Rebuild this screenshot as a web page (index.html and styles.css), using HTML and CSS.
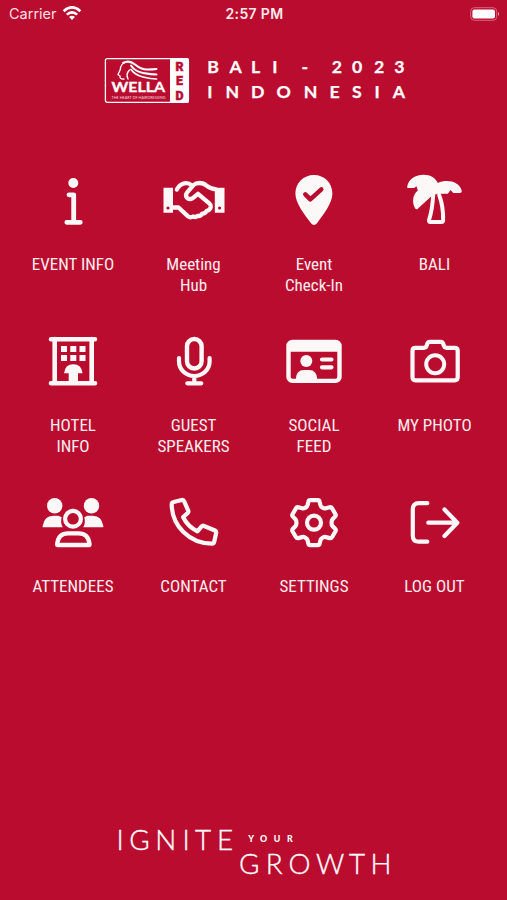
FILE: index.html
```html
<!DOCTYPE html>
<html lang="en">
<head>
<meta charset="utf-8">
<title>Event Home</title>
<link rel="stylesheet" href="styles.css">
</head>
<body>
<div class="status">
  <div class="carrier"><span>Carrier</span>
    <svg width="20" height="16" viewBox="0 0 20 16" fill="none" stroke="#fff" stroke-width="2.6"><path d="M1.600 5.200Q10-2.300 18.400 5.200M4.800 8.600Q10 4 15.200 8.600"/><path d="M7 11Q10 8.300 13 11L10 14.100Z" fill="#fff" stroke="none"/></svg>
  </div>
  <div class="time">2:57 PM</div>
  <svg class="battery" width="30" height="14" viewBox="0 0 30 14"><rect x=".7" y=".7" width="26" height="12.6" rx="3.6" fill="none" stroke="#d9667d" stroke-width="1"/><rect x="2.4" y="2.400" width="22.600" height="9.200" rx="2" fill="#fff"/><path d="M28 5Q30.300 7 28 9Z" fill="#e69aaa"/></svg>
</div>

<header class="brand">
  <svg width="310" height="48" viewBox="103 56 310 48">
    <rect x="105.400" y="58.700" width="83" height="43.600" rx="2" fill="none" stroke="#fff" stroke-width="1.300"/>
    <path d="M170 58h17q2 0 2 2v41q0 2-2 2h-17z" fill="#fff"/>
    <g fill="none" stroke="#fff" stroke-linecap="round">
      <path d="M127 61.500Q120.500 63.500 120.300 69.500L118 74.500L120 76Q119.500 79.500 124 79" stroke-width="1.300"/>
      <path d="M123 63Q129 59.500 135 64.500T147 69.500T156.500 69" stroke-width="2.100"/>
      <path d="M131 65.500Q135 71.500 143 73T156.500 74.500" stroke-width="2"/>
      <path d="M131 69.500Q135 75 143 77T156.500 79" stroke-width="1.700"/>
      <path d="M129.500 70Q125.500 74 128 79" stroke-width="1.400"/>
    </g>
    <text class="wella" x="111.500" y="91.800" textLength="53.500" lengthAdjust="spacingAndGlyphs">WELLA</text>
    <text class="tagline" x="111.500" y="99.400" textLength="54" lengthAdjust="spacingAndGlyphs">THE HEART OF HAIRDRESSING</text>
    <text class="red" x="179.500" y="70.600">R</text>
    <text class="red" x="179.500" y="85.200">E</text>
    <text class="red" x="179.500" y="100">D</text>
    <text class="place" y="72.800" x="207.200 229.500 251 272.200 301.500 331.800 352 374 394.200">BALI-2023</text>
    <text class="place" y="97.800" x="207.200 225.500 251 276.500 303.800 329.500 352 374.500 392.700">INDONESIA</text>
  </svg>
</header>

<main class="menu">
  <a class="item"><svg class="icon" viewBox="0 0 64 64"><circle cx="32.300" cy="14" r="5" class="fill"/><path d="M28 25.800h4.700v27M25.800 53.300h13.500" stroke-width="4.800"/></svg><span>EVENT INFO</span></a>

  <a class="item"><svg class="icon" viewBox="0 0 64 64"><path d="M1.500 18.700H11v25H1.500zM52.800 18.700h9.700v25h-9.700z" class="fill"/><circle cx="6" cy="39" r="1.600" class="hole"/><circle cx="57.600" cy="39" r="1.600" class="hole"/><path d="M10 38.500h6.500L25.500 46.800q2.800 2.400 5.500.7 2.500 1.300 4.500-.7 3 .8 4.700-2.200 3 .2 4.600-2.800 3.500-.5 4-4 .2-1.800-1.500-3.400L36 24.800l-5.200 4.400q-3.600 2-6-.6-1.800-2.800.4-5.300l6.300-7.300q2.300-2 6-2 4 0 7 2.700 3.500 3 9.500 3.700M14.800 20.500q3.200-5.800 8.700-6.300 3.700-.2 6 2" stroke-width="4.300"/></svg><span>Meeting<br>Hub</span></a>

  <a class="item"><svg class="icon" viewBox="0 0 64 64"><path class="fill" d="M32 6C21.500 6 13.400 14 13.400 24.500c0 10 9 20.500 15.600 29.800q3 3.600 6 0C41.500 45 50.400 34.500 50.400 24.500 50.400 14 42.500 6 32 6z"/><path class="check" d="M23.300 25.300l5 5L39.300 20.300"/></svg><span>Event<br>Check-In</span></a>

  <a class="item"><svg class="icon" viewBox="0 0 64 64"><path class="fill" d="M4.200 17.800C5 11 11.500 5.700 20.500 5.700c7 0 12.300 3.500 14.300 8.300 9-4 21.500-2 24 8q0 1.700-1.500 2h-7l-2.800-3-2.700 3.700H35l-5.500 1.500L14.500 40q-1.500 1-2.400-.7C8.800 33.500 9.500 26 14.800 21.500l-1.300-4.300-2.300 1.800H5q-1 0-.8-1.200z"/><path d="M30.200 26Q29.300 41 26 51.200q-.2 1.800 1.300 1.800h11q1.700 0 1.800-1.700Q40.500 38 36.200 26" stroke-width="4"/></svg><span>BALI</span></a>

  <a class="item"><svg class="icon" viewBox="0 0 64 64"><path d="M10 9.200h44M10 53.300h44M13.700 9v44M50.700 9v44" stroke-width="4.600"/><path class="fill" d="M20 16h6v6h-6zM29.300 16h6v6h-6zM38.500 16h6v6h-6zM20 25h6v6h-6zM29.300 25h6v6h-6zM38.500 25h6v6h-6zM23 43.300Q24 34.300 32.300 34.300T41.600 43.300H37v10h-9.300v-10z"/></svg><span>HOTEL<br>INFO</span></a>

  <a class="item"><svg class="icon" viewBox="0 0 64 64"><rect x="25" y="9" width="14.600" height="29.500" rx="7.300" stroke-width="4.400"/><path d="M17 28v3.500a15.300 14.500 0 0 0 30.600 0V28M32.300 46v7M25.300 53.300h14" stroke-width="4.200"/></svg><span>GUEST<br>SPEAKERS</span></a>

  <a class="item"><svg class="icon" viewBox="0 0 64 64"><rect x="6.500" y="11.900" width="51" height="39" rx="4" stroke-width="4.400"/><path class="fill" d="M6 12h52v9.700H6zM13.700 49.500Q14 40 22 40h5q8 0 8.300 9.500z"/><circle class="fill" cx="24.300" cy="31" r="6"/><path d="M40 29.500h9.500M40 37.300h9.500" stroke-width="4.200"/></svg><span>SOCIAL<br>FEED</span></a>

  <a class="item"><svg class="icon" viewBox="0 0 64 64"><path d="M12.500 17.800h8.800q1.800-.3 2.300-2l1-2.800q.4-1.200 1.700-1.200h11.900q1.300 0 1.700 1.200l1 2.800q.5 1.700 2.300 2h8.500q3 0 3 3v26.500q0 3-3 3H12.500q-3 0-3-3V20.800q0-3 3-3z" stroke-width="4.200"/><circle cx="32.200" cy="34.300" r="9" stroke-width="4"/></svg><span>MY PHOTO</span></a>

  <a class="item"><svg class="icon" viewBox="0 0 64 64"><circle class="fill" cx="13.700" cy="14.700" r="7.700"/><circle class="fill" cx="50.500" cy="14.700" r="7.700"/><path class="fill" d="M1.700 36.300v-1.500Q3.500 24.700 12 24.700h5.500l3.200 1.600q-1.500 5.500 1 10zM62.300 36.300v-1.500Q60.500 24.700 52 24.700h-5.500l-3.200 1.600q1.500 5.500-1 10z"/><circle cx="32" cy="27.800" r="7.900" stroke-width="4.200"/><path d="M16.200 54v-1.500Q17.500 42.300 27 42.300h10.600q9.500 0 10.900 10.200V54z" stroke-width="4.300"/></svg><span>ATTENDEES</span></a>

  <a class="item"><svg class="icon" viewBox="0 0 64 64"><path d="M11.700 11l8-2q1.800-.3 2.500 1.300l4 9.300q.6 1.400-.6 2.500l-4.500 3.900q4.500 9.500 14.300 14.300l4-4.700q1.100-1.300 2.600-.6l11 4.500q1.500.7 1.200 2.300l-2 9q-.4 2-2.400 1.900C27 52.300 9.700 34.500 9.700 13q0-1.600 2-2z" stroke-width="4.200"/></svg><span>CONTACT</span></a>

  <a class="item"><svg class="icon" viewBox="0 0 64 64"><g transform="translate(32 31.700)"><path d="M-3.800-22.500H3.800Q5.300-22.500 5.600-21L6.400-17.700Q6.800-16.200 8.200-15.300L9-14.800Q10.400-14 11.900-14.400L15.700-15.400Q17.200-15.800 18-14.500L21.500-8.500Q22.200-7.200 21.100-6.100L18.600-3.500Q17.600-2.300 17.600-.8V.8Q17.600 2.300 18.600 3.500L21.100 6.100Q22.200 7.200 21.500 8.500L18 14.500Q17.200 15.800 15.700 15.400L11.900 14.400Q10.400 14 9 14.800L8.200 15.300Q6.800 16.200 6.400 17.700L5.600 21Q5.300 22.500 3.800 22.500H-3.800Q-5.300 22.500-5.600 21L-6.400 17.700Q-6.800 16.200-8.200 15.300L-9 14.800Q-10.400 14-11.900 14.400L-15.700 15.400Q-17.200 15.800-18 14.500L-21.500 8.500Q-22.200 7.200-21.100 6.100L-18.600 3.500Q-17.600 2.300-17.600 .8V-.8Q-17.600-2.300-18.600-3.500L-21.100-6.100Q-22.200-7.200-21.500-8.500L-18-14.500Q-17.200-15.800-15.700-15.400L-11.900-14.400Q-10.400-14-9-14.800L-8.200-15.300Q-6.800-16.200-6.400-17.700L-5.600-21Q-5.300-22.500-3.800-22.500z" stroke-width="4.200"/><circle r="7" stroke-width="4.200"/></g></svg><span>SETTINGS</span></a>

  <a class="item"><svg class="icon" viewBox="0 0 64 64"><path d="M24.300 12.200h-8.500q-6 0-6 6v26.500q0 6 6 6h8.500M25.300 31.700h28M41.500 18.500L54.300 31.700 41.500 45" stroke-width="4.200"/></svg><span>LOG OUT</span></a>
</main>

<footer class="slogan">
  <svg width="290" height="68" viewBox="110 818 290 68">
    <text class="thin" y="850" x="116.600 129.200 155.200 182.400 195 217">IGNITE</text>
    <text class="your" y="842.300" x="248.300 260 273.700 287">YOUR</text>
    <text class="thin" y="873.600" x="239 265.700 288.500 316 349 370.500">GROWTH</text>
  </svg>
</footer>
</body>
</html>
```

FILE: styles.css
```css
* { box-sizing: border-box; }
body {
  margin: 0;
  height: 900px;
  display: flex;
  flex-direction: column;
  background: #ba0c2f;
  color: #fff;
  overflow: hidden;
}
.status {
  height: 28px;
  padding: 0 7px 0 9px;
  display: grid;
  grid-template-columns: 1fr auto 1fr;
  align-items: center;
  font: 14.5px/28px Inter, "Liberation Sans", sans-serif;
}
.carrier { display: flex; align-items: center; gap: 5px; color: #fbdfe4; }
.time { font-weight: 600; font-size: 14px; letter-spacing: .35px; color: #fde9ec; }
.battery { justify-self: end; }
.brand { height: 126px; padding: 28px 0 0 103px; }
.brand svg, .slogan svg { display: block; }
text { fill: #fff; font-family: Lato, sans-serif; }
.wella { font: 700 13px Lato, sans-serif; stroke: #fff; stroke-width: .3px; }
.tagline { font-size: 4.2px; opacity: .8; }
.red { fill: #ba0c2f; font: 900 12.4px Roboto, sans-serif; text-anchor: middle; stroke: #ba0c2f; stroke-width: .5px; }
.place { font-size: 17.7px; font-weight: 700; stroke: #fff; stroke-width: .25px; }
.menu {
  padding: 15px 12.25px 0 12.75px;
  display: grid;
  grid-template-columns: repeat(4, 1fr);
  grid-auto-rows: 161px;
}
.item {
  display: flex;
  flex-direction: column;
  align-items: center;
  gap: 21px;
  text-align: center;
  font: 17px/21px "Roboto Condensed", Roboto, sans-serif;
  font-stretch: 75%;
  color: #fdecef;
}
.icon {
  width: 64px;
  height: 64px;
  fill: none;
  stroke: #fdf8f8;
  stroke-linecap: round;
  stroke-linejoin: round;
}
.icon .fill { fill: #fdf8f8; stroke: none; }
.icon .hole { fill: #ba0c2f; stroke: none; }
.icon .check { stroke: #ba0c2f; stroke-width: 4.5; }
.slogan { margin-top: auto; padding: 0 0 14px 110px; }
.thin { font-size: 27.8px; font-weight: 300; stroke: #fff; stroke-width: .35px; }
.your { font-size: 8.8px; font-weight: 900; }
```
